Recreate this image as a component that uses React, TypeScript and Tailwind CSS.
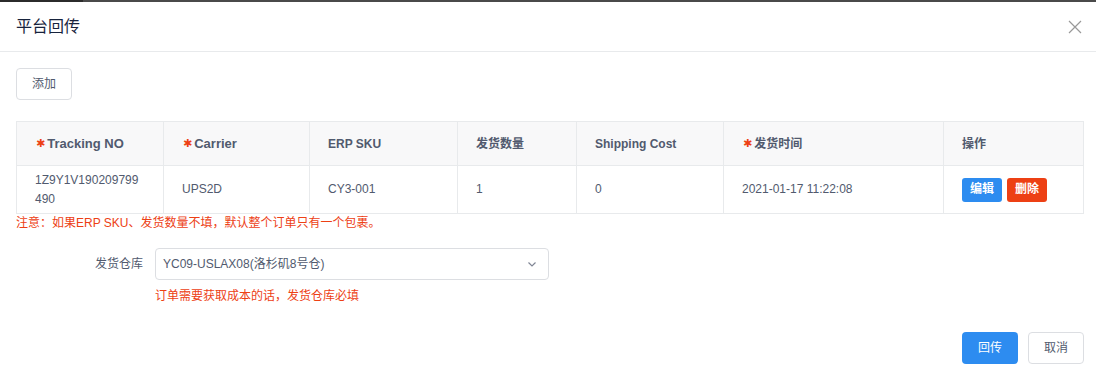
const font = { fontFamily: '"Liberation Sans", "Noto Sans CJK SC", sans-serif' };

const cols = [
  { w: "w-[147px]", title: "Tracking NO", required: true, bold: true },
  { w: "w-[146px]", title: "Carrier", required: true, bold: true },
  { w: "w-[148px]", title: "ERP SKU" },
  { w: "w-[119px]", title: "发货数量" },
  { w: "w-[147px]", title: "Shipping Cost" },
  { w: "w-[220px]", title: "发货时间", required: true },
  { w: "flex-1", title: "操作" },
];

function Star() {
  return (
    <span className="mr-[2px] text-[11px] leading-none text-[#ed4014]" style={{ fontFamily: '"DejaVu Sans", sans-serif' }}>
      ✱
    </span>
  );
}

function HeaderCell({ w, title, required, bold, last }: { w: string; title: string; required?: boolean; bold?: boolean; last?: boolean }) {
  return (
    <div className={`${w} flex items-center pl-[18px] ${required ? "pl-[19px]" : ""} ${last ? "" : "border-r border-[#e8eaec]"}`}>
      {required && <Star />}
      <span className={bold ? "font-bold text-[13px] text-[#515a6e]" : "font-semibold text-[12px] text-[#515a6e]"}>{title}</span>
    </div>
  );
}

function BodyCell({ w, children, last }: { w: string; children: React.ReactNode; last?: boolean }) {
  return (
    <div className={`${w} flex items-center pl-[18px] pr-[18px] text-[12px] leading-[19px] text-[#515a6e] ${last ? "" : "border-r border-[#e8eaec]"}`}>
      {children}
    </div>
  );
}

export default function App() {
  return (
    <div className="w-[1096px] h-[377px] bg-white overflow-hidden" style={font}>
      <div className="flex h-[2px]">
        <div className="w-[83px] bg-[#2b2b2b]" />
        <div className="flex-1 bg-[#4a4a4a]" />
      </div>
      <div className="flex items-center justify-between h-[50px] pl-[16px] pr-[14px] border-b border-[#e8eaec]">
        <span className="text-[16px] text-[#17233d]">平台回传</span>
        <svg width="14" height="14" viewBox="0 0 14 14">
          <path d="M1 1L13 13M13 1L1 13" stroke="#999" strokeWidth="1.2" fill="none" />
        </svg>
      </div>

      <div className="pl-[16px] pr-[12px] pt-[16px]">
        <button className="h-[32px] w-[56px] rounded-[4px] border border-[#dcdee2] text-[12px] text-[#515a6e] bg-white">添加</button>

        <div className="mt-[21px] border border-[#e8eaec]">
          <div className="flex h-[44px] bg-[#f8f8f9] border-b border-[#e8eaec]">
            {cols.map((c, i) => (
              <HeaderCell key={c.title} w={c.w} title={c.title} required={c.required} bold={c.bold} last={i === cols.length - 1} />
            ))}
          </div>
          <div className="flex h-[47px]">
            <BodyCell w={cols[0].w}>1Z9Y1V190209799 490</BodyCell>
            <BodyCell w={cols[1].w}>UPS2D</BodyCell>
            <BodyCell w={cols[2].w}>CY3-001</BodyCell>
            <BodyCell w={cols[3].w}>1</BodyCell>
            <BodyCell w={cols[4].w}>0</BodyCell>
            <BodyCell w={cols[5].w}>2021-01-17 11:22:08</BodyCell>
            <BodyCell w={cols[6].w} last>
              <div className="flex gap-[5px]">
                <span className="h-[24px] w-[40px] flex items-center justify-center rounded-[3px] bg-[#2d8cf0] text-white text-[12px] font-semibold">编辑</span>
                <span className="h-[24px] w-[40px] flex items-center justify-center rounded-[3px] bg-[#ed4014] text-white text-[12px] font-semibold">删除</span>
              </div>
            </BodyCell>
          </div>
        </div>

        <p className="mt-[1px] text-[12px] leading-[16px] text-[#ed4014]">注意：如果ERP SKU、发货数量不填，默认整个订单只有一个包裹。</p>

        <div className="mt-[17px] flex items-center">
          <label className="w-[139px] pr-[12px] text-right text-[12px] text-[#515a6e]">发货仓库</label>
          <div className="flex items-center justify-between w-[394px] h-[32px] rounded-[4px] border border-[#dcdee2] pl-[7px] pr-[10px]">
            <span className="text-[12px] text-[#515a6e]">YC09-USLAX08(洛杉矶8号仓)</span>
            <svg width="12" height="12" viewBox="0 0 12 12">
              <path d="M2.5 4.5L6 8L9.5 4.5" stroke="#808695" strokeWidth="1.2" fill="none" />
            </svg>
          </div>
        </div>
        <p className="ml-[139px] mt-[8px] text-[12px] leading-[16px] text-[#ed4014]">订单需要获取成本的话，发货仓库必填</p>

        <div className="mt-[28px] flex justify-end gap-[10px]">
          <button className="h-[32px] w-[56px] rounded-[4px] bg-[#2d8cf0] text-white text-[12px]">回传</button>
          <button className="h-[32px] w-[56px] rounded-[4px] border border-[#dcdee2] bg-white text-[#515a6e] text-[12px]">取消</button>
        </div>
      </div>
    </div>
  );
}
